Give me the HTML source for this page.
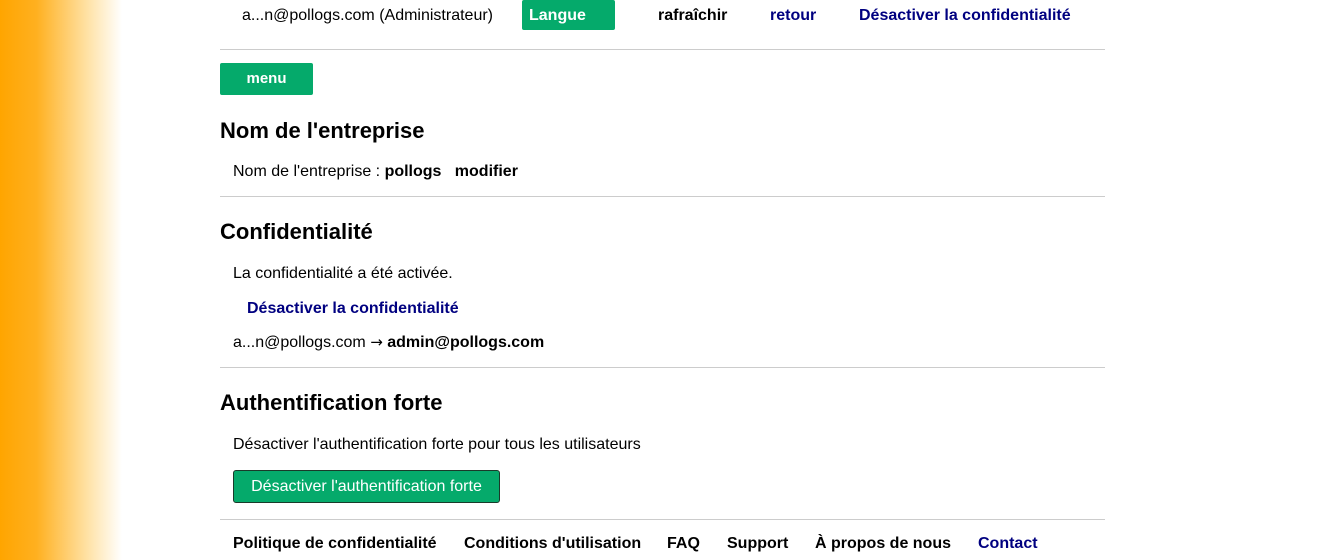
<!DOCTYPE html>
<html><head><meta charset="utf-8"><style>
body{margin:0;width:1329px;height:560px;overflow:hidden;background:#fff;font-family:"Liberation Sans",Arial,sans-serif;font-size:16px;color:#000;position:relative}
.grad{position:absolute;left:0;top:0;width:122px;height:560px;background:linear-gradient(to right,#ffa500 0%,#ffb020 30%,#ffe0a0 70%,#fff 100%)}
.a{position:absolute;white-space:nowrap;line-height:1}
.b{font-weight:bold}
.n{color:#000080;font-weight:bold}
.hr{position:absolute;left:220px;width:885px;height:1px;background:#ccc}
.h{position:absolute;left:220px;font-size:22px;font-weight:bold;line-height:1}
.btn{position:absolute;background:#05aa6b;color:#fff;border-radius:2px}
</style></head><body>
<div class="grad"></div>
<div class="a" style="left:242px;top:8px">a...n@pollogs.com (Administrateur)</div>
<div class="btn b" style="left:522px;top:0;width:93px;height:30px"><span class="a" style="left:7px;top:8px">Langue</span></div>
<div class="a b" style="left:658px;top:8px">rafraîchir</div>
<div class="a n" style="left:770px;top:8px">retour</div>
<div class="a n" style="left:859px;top:8px">Désactiver la confidentialité</div>
<div class="hr" style="top:49px"></div>
<div class="btn b" style="left:220px;top:63px;width:93px;height:32px;text-align:center;line-height:32px;font-size:15px">menu</div>
<div class="h" style="top:120px">Nom de l'entreprise</div>
<div class="a" style="left:233px;top:164px">Nom de l'entreprise : <b>pollogs</b> &nbsp; <b>modifier</b></div>
<div class="hr" style="top:196px"></div>
<div class="h" style="top:221px">Confidentialité</div>
<div class="a" style="left:233px;top:266px">La confidentialité a été activée.</div>
<div class="a n" style="left:247px;top:301px">Désactiver la confidentialité</div>
<div class="a" style="left:233px;top:335px">a...n@pollogs.com <span style="font-family:'DejaVu Sans',sans-serif;font-size:15px">→</span> <b>admin@pollogs.com</b></div>
<div class="hr" style="top:367px"></div>
<div class="h" style="top:392px">Authentification forte</div>
<div class="a" style="left:233px;top:437px">Désactiver l'authentification forte pour tous les utilisateurs</div>
<div class="btn" style="left:233px;top:470px;width:265px;height:31px;border:1px solid #1a3a2a;border-radius:3px;text-align:center;line-height:32px">Désactiver l'authentification forte</div>
<div class="hr" style="top:519px"></div>
<div class="a b" style="left:233px;top:536px">Politique de confidentialité</div>
<div class="a b" style="left:464px;top:536px">Conditions d'utilisation</div>
<div class="a b" style="left:667px;top:536px">FAQ</div>
<div class="a b" style="left:727px;top:536px">Support</div>
<div class="a b" style="left:815px;top:536px">À propos de nous</div>
<div class="a n" style="left:978px;top:536px">Contact</div>
</body></html>
